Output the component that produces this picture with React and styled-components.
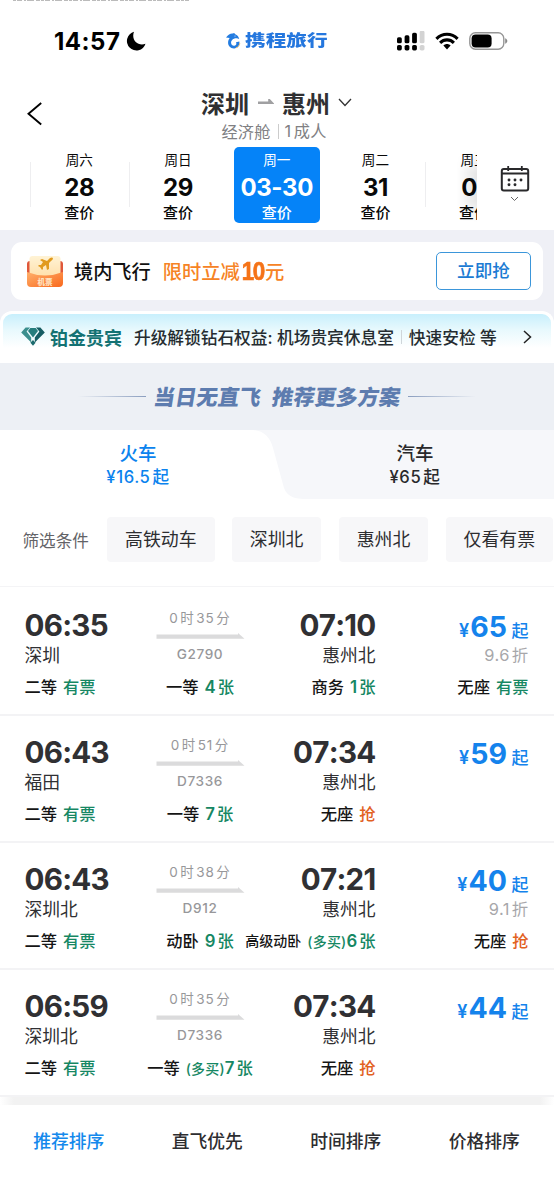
import React from "react";
import styled, { createGlobalStyle } from "styled-components";

const GlobalStyle = createGlobalStyle`
  * { box-sizing: border-box; }
  body {
    margin: 0;
    background: #fff;
    color: #2b2b2d;
    font-family: Inter, "Noto Sans CJK SC", sans-serif;
    -webkit-font-smoothing: antialiased;
  }
`;

const Page = styled.div`
  width: 554px;
  height: 1200px;
  overflow: hidden;
  background: #fff;
  display: flex;
  flex-direction: column;
  white-space: nowrap;
`;

const StatusBar = styled.header`
  height: 80px;
  flex: none;
  display: grid;
  grid-template-rows: 4px 74px;
  grid-template-columns: 226px 1fr 157px;
`;

const StatusTrace = styled.div`
  grid-column: 1 / -1;
  padding-left: 13px;
  svg { display: block; }
`;

const StatusCell = styled.div`
  display: flex;
  align-items: center;
`;

const Clock = styled.span`
  margin-left: 54px;
  width: 72px;
  font-size: 24px;
  font-weight: 700;
  letter-spacing: 0.5px;
  color: #000;
`;

const Brand = styled.span`
  display: inline-block;
  transform: scaleX(1.29);
  transform-origin: left center;
  margin: -2px 0 0 4px;
  font-size: 16px;
  line-height: 20px;
  font-weight: 900;
  color: #2577de;
`;

const StatusIcons = styled(StatusCell)`
  gap: 10px;
`;

const Header = styled.div`
  height: 66px;
  flex: none;
  display: grid;
  grid-template-columns: 60px 1fr 60px;
  svg { display: block; }
`;

const Back = styled.div`
  padding: 22px 0 0 27px;
`;

const Route = styled.div`
  display: flex;
  flex-direction: column;
  align-items: center;
`;

const RouteTitle = styled.div`
  display: flex;
  align-items: center;
  height: 36px;
  margin: 4px 0 2px -1px;
  font-size: 24px;
  font-weight: 700;
  color: #303032;
  svg:first-of-type { margin: 0 8px 0 9px; }
  svg:last-of-type { margin-left: 8px; }
`;

const RouteMeta = styled.div`
  display: flex;
  align-items: center;
  height: 18px;
  margin-left: -6px;
  font-size: 16.2px;
  color: #808083;
  letter-spacing: 0.2px;
  span + span {
    border-left: 1px solid #ccc;
    margin-left: 7px;
    padding-left: 6px;
    line-height: 15px;
  }
`;

const Adults = styled.b`
  font-weight: 400;
  margin-right: 2.5px;
`;

const Calendar = styled.div`
  height: 84px;
  flex: none;
  display: flex;
`;

const Dates = styled.div`
  width: 477px;
  padding-left: 30px;
  display: flex;
  overflow: hidden;
  position: relative;
  &::after {
    content: "";
    position: absolute;
    right: 0;
    top: 6px;
    width: 20px;
    height: 70px;
    background: linear-gradient(90deg, rgba(0,0,0,0), rgba(0,0,0,0.1));
    mask-image: linear-gradient(transparent, #000 30%, #000 70%, transparent);
  }
`;

const DateCell = styled.div`
  flex: none;
  width: 98.7px;
  height: 78px;
  display: flex;
  justify-content: center;
  background: ${(p) => (p.$line ? "linear-gradient(#eeeef0, #eeeef0) 0 16px / 1px 45px no-repeat" : "none")};
`;

const DateTile = styled.div`
  width: 86px;
  height: 76px;
  margin-top: 1px;
  border-radius: 5px;
  text-align: center;
  color: ${(p) => (p.$active ? "#fff" : "#090909")};
  background: ${(p) => (p.$active ? "#0583f8" : "transparent")};
`;

const Weekday = styled.div`
  height: 27px;
  padding-top: 3px;
  font-size: 13.6px;
  line-height: 20px;
`;

const DayNumber = styled.div`
  font-size: 24px;
  line-height: 28px;
  font-weight: 700;
  letter-spacing: -0.4px;
`;

const PriceHint = styled.div`
  padding-top: 1px;
  font-size: 15px;
  line-height: 20px;
  font-weight: 500;
`;

const CalendarButton = styled.div`
  flex: 1;
  padding: 20px 2px 0 0;
  display: flex;
  flex-direction: column;
  align-items: center;
  gap: 3px;
`;

const PromoBand = styled.section`
  height: 81px;
  flex: none;
  padding: 12px 11px;
  background: #eff0f6;
`;

const PromoCard = styled.div`
  height: 58px;
  border-radius: 11px;
  background: #fff;
  padding: 0 12px 0 15px;
  display: flex;
  align-items: center;
`;

const PromoTitle = styled.span`
  margin: -1px 0 0 10px;
  font-size: 19.2px;
  font-weight: 500;
  color: #111;
`;

const PromoOffer = styled.span`
  margin: -1px 0 0 12px;
  flex: 1;
  font-size: 19.3px;
  font-weight: 500;
  color: #f68325;
  display: flex;
  align-items: center;
  b {
    font-family: "Liberation Sans", sans-serif;
    font-size: 26px;
    line-height: 26px;
    width: 25px;
    letter-spacing: -1.6px;
    color: #f57317;
    transform: scaleX(0.86);
    -webkit-text-stroke: 0.7px #f57317;
  }
`;

const GrabButton = styled.button`
  width: 95px;
  height: 38px;
  border: 1px solid #3b96da;
  border-radius: 5px;
  background: #fff;
  color: #1c7bd3;
  font: 500 17.6px Inter, "Noto Sans CJK SC", sans-serif;
  padding: 0 0 4px;
`;

const VipBand = styled.section`
  height: 52px;
  flex: none;
  background: #eff0f6;
`;

const VipCard = styled.div`
  height: 52px;
  border: 3px solid #fff;
  border-bottom: 0;
  border-radius: 12px 12px 0 0;
  background: linear-gradient(180deg, #c8effc 0, #e8f9fd 16px, #fff 34px);
  padding: 0 19px 4px 18px;
  display: flex;
  align-items: center;
  font-size: 16.7px;
  color: #252c30;
`;

const VipName = styled.b`
  margin: 0 12px 0 5px;
  font-size: 18px;
  font-weight: 700;
  color: #137273;
`;

const VipPerks = styled.span`
  flex: 1;
  font-weight: 500;
  display: flex;
  align-items: center;
`;

const VipDivider = styled.i`
  width: 1px;
  height: 14px;
  margin: 0 7px;
  background: #cfd6da;
`;

const Notice = styled.section`
  height: 67px;
  flex: none;
  background: #edf0f5;
  display: flex;
  align-items: center;
  justify-content: center;
  gap: 8px;
`;

const NoticeText = styled.h2`
  margin: 0;
  font-size: 21.3px;
  line-height: 30px;
  font-weight: 900;
  color: #5d7caf;
  transform: skewX(-9deg);
  letter-spacing: 0.1px;
  word-spacing: 7px;
`;

const NoticeLine = styled.span`
  width: 68px;
  height: 1.5px;
  background: linear-gradient(${(p) => (p.$right ? "270deg" : "90deg")}, rgba(127, 148, 185, 0), #8b9ebf);
`;

const Tabs = styled.nav`
  height: 70px;
  flex: none;
  display: flex;
  position: relative;
`;

const Tab = styled.div`
  flex: 1;
  height: ${(p) => (p.$active ? 70 : 69)}px;
  padding: 10px 1px 0 0;
  text-align: center;
  background: ${(p) => (p.$active ? "#fff" : "#f6f7fa")};
  color: ${(p) => (p.$active ? "#0b83ee" : "#29292b")};
  font-weight: 500;
`;

const TabName = styled.div`
  font-size: 18.5px;
  line-height: 27px;
`;

const TabPrice = styled.div`
  font-size: 16.6px;
  line-height: 20px;
  letter-spacing: 0.6px;
  span { margin-right: 2px; }
`;

const TabSlope = styled.svg`
  position: absolute;
  left: 250px;
  top: 0;
`;

const Filters = styled.div`
  height: 87px;
  flex: none;
  padding: 17px 0 0 22.5px;
  margin-bottom: 1.4px;
  display: flex;
  border-bottom: 1px solid #f4f4f6;
  overflow: hidden;
`;

const FilterLabel = styled.span`
  width: 84.5px;
  flex: none;
  font-size: 16.6px;
  line-height: 48px;
  color: #636367;
`;

const Chip = styled.span`
  flex: none;
  height: 45px;
  margin-right: 17.2px;
  padding: 0 18px;
  border-radius: 4px;
  background: #f7f7f9;
  font-size: 17.9px;
  line-height: 46px;
  color: #2d2d30;
`;

const Trip = styled.article`
  height: 127.2px;
  flex: none;
  padding: 19.4px 25px 0 24.5px;
  display: grid;
  grid-template-columns: 121px 109px 121px 153px;
  grid-template-rows: 63px 30px;
  border-bottom: 2px solid #f3f3f5;
`;

const Stop = styled.div`
  text-align: ${(p) => (p.$end ? "right" : "left")};
`;

const Time = styled.div`
  font-size: 29.6px;
  line-height: 35px;
  height: 35px;
  font-weight: 700;
  font-kerning: none;
  letter-spacing: -0.75px;
  margin-right: ${(p) => (p.$end ? 0 : -0.75)}px;
  color: #303033;
`;

const Station = styled.div`
  font-size: 17.8px;
  line-height: 25px;
  color: #303033;
`;

const Journey = styled.div`
  padding-top: 1px;
  text-align: center;
  color: #97979a;
  svg { display: block; margin: 0 auto; }
`;

const Duration = styled.div`
  font-size: 13.5px;
  line-height: 18px;
  height: 24px;
  letter-spacing: 1px;
  span { margin-right: 1.5px; }
  span + span { margin-left: 1.5px; }
`;

const TrainNumber = styled.div`
  margin-top: 5px;
  font-size: 13.6px;
  line-height: 20px;
  font-weight: 500;
  letter-spacing: 0.6px;
`;

const Fare = styled.div`
  text-align: right;
`;

const Price = styled.div`
  display: flex;
  align-items: baseline;
  justify-content: flex-end;
  height: 37px;
  line-height: 38px;
  color: #1483ec;
  font-weight: 500;
  font-size: 17px;
  b {
    font-size: 28.5px;
    font-weight: 700;
    margin: 0 4.5px 0 1px;
  }
`;

const Yen = styled.span`
  font-size: 18px;
  font-weight: 600;
`;

const Discount = styled.div`
  font-size: 16.4px;
  line-height: 21px;
  color: #a7a7aa;
  letter-spacing: 0.4px;
  span { margin-right: 2px; }
`;

const Seat = styled.div`
  display: flex;
  align-items: center;
  gap: 6px;
  height: 30px;
  font-size: 16.3px;
  font-weight: 500;
  color: #151515;
  justify-content: ${(p) => p.$align};
`;

const SeatName = styled.span`
  font-size: ${(p) => (p.$compact ? "14px" : "inherit")};
`;

const SeatCount = styled.span`
  color: ${(p) => (p.$rush ? "#e2611f" : "#168763")};
  small { font-size: 14px; letter-spacing: 0.2px; }
  b {
    font-weight: 600;
    font-size: 16.8px;
    margin-right: 2px;
  }
`;

const BarGap = styled.div`
  height: 8px;
  flex: none;
  background: linear-gradient(90deg, #fff 0, #f2f2f2 14px, #f2f2f2 540px, #fff 554px);
`;

const SortBar = styled.footer`
  flex: 1;
  display: flex;
  background: #fff;
`;

const SortItem = styled.div`
  flex: 1;
  text-align: center;
  padding: 23px 1px 0 0;
  font-size: 17.8px;
  line-height: 28px;
  font-weight: 500;
  color: ${(p) => (p.$active ? "#1489ec" : "#2d2d30")};
`;

const Moon = () => (
  <svg width="21" height="20" viewBox="0 0 21 20">
    <path d="M8 .8A9.5 9.5 0 1 0 19.5 12.8C12 15.6 4.8 9 8 .8Z" fill="#000" />
  </svg>
);

const Dolphin = () => (
  <svg width="15" height="16" viewBox="0 0 15 16">
    <path d="M0 4.6C2.3 1.6 4 .4 6.6.5L8.3 0l.6 1.1c2.6 1 3.8 2.8 4.3 5L11 5.3C7.6 4.8 4.8 7.2 5.1 10c.2 2.2 2.2 3.2 3.9 2.5 1.4-.6 1.7-2 1-3.3l3.3-.6c.9 3.6-1.3 6.6-4.8 6.8-4 .3-6.8-2.6-6.4-6.4.2-1.8.9-3.1 1.6-4Z" fill="#237ce0" />
    <path d="M13.8 10c-.2 2.6-1.8 4.3-4 4.9" fill="none" stroke="#efc174" strokeWidth="1" />
    <circle cx="9" cy="3" r=".5" fill="#fff" />
  </svg>
);

const Signal = () => (
  <svg width="28" height="20" viewBox="0 0 28 20">
    {[[0, 6], [7.6, 8], [15.1, 10.5], [22.7, 12.5]].map(([x, h], i) => (
      <g key={x} fill={i === 3 ? "#d3d3d3" : "#000"}>
        <rect x={x} y={12.3 - h} width="4.8" height={h} rx="1.6" />
        <rect x={x} y="14" width="4.8" height="5.4" rx="1.6" />
      </g>
    ))}
  </svg>
);

const Wifi = () => (
  <svg width="24" height="18" viewBox="0 0 24 18">
    <g fill="none" stroke="#000" strokeWidth="3.1">
      <path d="M1.4 6.8C7.5.7 16.5.7 22.6 6.8" />
      <path d="M5.1 10.8c4-3.9 9.8-3.9 13.8 0" />
    </g>
    <path d="M8.4 13.6c2.1-2 5.1-2 7.2 0L12 17.4Z" fill="#000" />
  </svg>
);

const Battery = () => (
  <svg width="39" height="18" viewBox="0 0 39 18">
    <rect x=".8" y=".8" width="34" height="16.4" rx="5.6" fill="#fff" stroke="#969696" strokeWidth="1.4" />
    <rect x="2.6" y="2.6" width="20" height="12.8" rx="4" fill="#000" />
    <path d="M36.2 6.2c2.8 1.3 2.8 4.3 0 5.6Z" fill="#888" />
  </svg>
);

const Chevron = ({ width, height, weight = 1.3, color = "#333" }) => (
  <svg width={width} height={height} viewBox={`0 0 ${width} ${height}`}>
    <path d={`M1 1L${width / 2} ${height - 1.5}L${width - 1} 1`} fill="none" stroke={color} strokeWidth={weight} />
  </svg>
);

const CalendarIcon = () => (
  <svg width="30" height="27" viewBox="0 0 30 27">
    <rect x="1.8" y="3" width="26.4" height="21.6" rx="2" fill="none" stroke="#29292b" strokeWidth="2" />
    <path d="M2 7.5h26M8.2 0v5M21.8 0v5" stroke="#29292b" strokeWidth="1.8" />
    <g fill="#29292b">
      {[[9, 14], [15, 14], [21, 14], [9, 18.8], [15, 18.8]].map(([x, y]) => (
        <circle key={`${x}-${y}`} cx={x} cy={y} r="1.45" />
      ))}
    </g>
  </svg>
);

const TicketLabel = styled.text`
  font: 900 7.5px "Noto Sans CJK SC", sans-serif;
  fill: #ffe3c2;
`;

const TicketIcon = () => (
  <svg width="38" height="33" viewBox="0 0 38 33">
    <defs>
      <linearGradient id="pocket" x1="0" y1="0" x2="1" y2="1">
        <stop offset="0" stopColor="#ffb06b" />
        <stop offset="1" stopColor="#f9681d" />
      </linearGradient>
      <linearGradient id="sheet" x1="0" y1="0" x2="0" y2="1">
        <stop offset="0" stopColor="#fff3d5" />
        <stop offset="1" stopColor="#ffdda5" />
      </linearGradient>
    </defs>
    <rect x="1" y="6" width="36" height="16" rx="3" fill="#df573a" />
    <rect x="3.5" y="1" width="31" height="24" rx="3" fill="url(#sheet)" />
    <path d="M1 17q18 7 36 0v11q0 4-4 4H5q-4 0-4-4Z" fill="url(#pocket)" />
    <path d="M14 5l2-1 5 2 3-3q2-1 3 0 0 2-2 3l-2 2 0 6-2 1-1-5-3 2v2l-1 1-2-3-2-1 1-1h2l2-3Z" fill="#e19a1d" />
    <TicketLabel x="11.5" y="29.5">机票</TicketLabel>
  </svg>
);

const Diamond = () => (
  <svg width="24" height="19" viewBox="0 0 24 19">
    <path d="M4.6.4H9L5.6 4.4l4.6 6.2v4.8L.2 5.4Z" fill="#3c8f8e" />
    <path d="M19.4.4H15l3.4 4-4.6 6.2v4.8l10-10Z" fill="#175d63" />
    <path d="M9.3.9h5.4L17 4.1 12 10.6 7 4.1Z" fill="#267d7d" />
    <path d="M12 12.9l2.6 2.9L12 18.8l-2.6-3Z" fill="#1c6b6e" />
  </svg>
);

const RouteArrow = () => (
  <svg width="16" height="8" viewBox="0 0 16 8">
    <path d="M0 3.4h10.2V.9h1.6L16 5.4v.7H0Z" fill="#a0a0a2" />
  </svg>
);

const JourneyArrow = () => (
  <svg width="89" height="6" viewBox="0 0 89 6">
    <path d="M.5 1.5H82V0l6.5 5.7H.5Z" fill="#dbdbdc" />
  </svg>
);

const days = [
  { week: "周六", day: "28", line: true },
  { week: "周日", day: "29", line: true },
  { week: "周一", day: "03-30", active: true },
  { week: "周二", day: "31" },
  { week: "周三", day: "01", line: true },
];

const seat = (name, count, extra = {}) => ({ name, count, ...extra });
const rush = { rush: true };
const more = { more: true };

const trips = [
  {
    from: ["06:35", "深圳"], to: ["07:10", "惠州北"], time: ["0", "35"], train: "G2790", price: 65, discount: "9.6",
    seats: [seat("二等", "有票"), seat("一等", 4), seat("商务", 1), seat("无座", "有票")],
  },
  {
    from: ["06:43", "福田"], to: ["07:34", "惠州北"], time: ["0", "51"], train: "D7336", price: 59,
    seats: [seat("二等", "有票"), seat("一等", 7), seat("无座", "抢", rush)],
  },
  {
    from: ["06:43", "深圳北"], to: ["07:21", "惠州北"], time: ["0", "38"], train: "D912", price: 40, discount: "9.1",
    seats: [seat("二等", "有票"), seat("动卧", 9), seat("高级动卧", 6, more), seat("无座", "抢", rush)],
  },
  {
    from: ["06:59", "深圳北"], to: ["07:34", "惠州北"], time: ["0", "35"], train: "D7336", price: 44,
    seats: [seat("二等", "有票"), seat("一等", 7, more), seat("无座", "抢", rush)],
  },
];

const seatAlign = ["flex-start", "center", "flex-end", "flex-end"];

function TripRow({ trip }) {
  return (
    <Trip>
      <Stop>
        <Time>{trip.from[0]}</Time>
        <Station>{trip.from[1]}</Station>
      </Stop>
      <Journey>
        <Duration><span>{trip.time[0]}</span>时<span>{trip.time[1]}</span>分</Duration>
        <JourneyArrow />
        <TrainNumber>{trip.train}</TrainNumber>
      </Journey>
      <Stop $end>
        <Time $end>{trip.to[0]}</Time>
        <Station>{trip.to[1]}</Station>
      </Stop>
      <Fare>
        <Price><Yen>¥</Yen><b>{trip.price}</b>起</Price>
        {trip.discount && <Discount><span>{trip.discount}</span>折</Discount>}
      </Fare>
      {trip.seats.map((s, i) => (
        <Seat key={s.name} $align={seatAlign[i]}>
          <SeatName $compact={s.name.length > 2}>{s.name}</SeatName>
          <SeatCount $rush={s.rush}>
            {s.more && <small>(多买)</small>}
            {typeof s.count === "number" ? <><b>{s.count}</b>张</> : s.count}
          </SeatCount>
        </Seat>
      ))}
    </Trip>
  );
}

export default function App() {
  return (
    <Page>
      <GlobalStyle />
      <StatusBar>
        <StatusTrace>
          <svg width="176" height="2" viewBox="0 0 176 2">
            <path d="M0 .5h176" stroke="#bbb" strokeWidth="1" strokeDasharray="3 1 5 2 2 1 7 2 4 1" />
          </svg>
        </StatusTrace>
        <StatusCell><Clock>14:57</Clock><Moon /></StatusCell>
        <StatusCell><Dolphin /><Brand>携程旅行</Brand></StatusCell>
        <StatusIcons><Signal /><Wifi /><Battery /></StatusIcons>
      </StatusBar>

      <Header>
        <Back>
          <svg width="16" height="24" viewBox="0 0 16 24">
            <path d="M14.2 1L1.5 11.7 14.2 22.5" fill="none" stroke="#000" strokeWidth="1.9" />
          </svg>
        </Back>
        <Route>
          <RouteTitle>
            深圳<RouteArrow />惠州<Chevron width={14} height={9} />
          </RouteTitle>
          <RouteMeta><span>经济舱</span><span><Adults>1</Adults>成人</span></RouteMeta>
        </Route>
      </Header>

      <Calendar>
        <Dates>
          {days.map((d) => (
            <DateCell key={d.week} $line={d.line}>
              <DateTile $active={d.active}>
                <Weekday>{d.week}</Weekday>
                <DayNumber>{d.day}</DayNumber>
                <PriceHint>查价</PriceHint>
              </DateTile>
            </DateCell>
          ))}
        </Dates>
        <CalendarButton>
          <CalendarIcon />
          <Chevron width={9} height={6} weight={1} color="#666" />
        </CalendarButton>
      </Calendar>

      <PromoBand>
        <PromoCard>
          <TicketIcon />
          <PromoTitle>境内飞行</PromoTitle>
          <PromoOffer>限时立减<b>10</b>元</PromoOffer>
          <GrabButton>立即抢</GrabButton>
        </PromoCard>
      </PromoBand>

      <VipBand>
        <VipCard>
          <Diamond />
          <VipName>铂金贵宾</VipName>
          <VipPerks>升级解锁钻石权益: 机场贵宾休息室<VipDivider />快速安检 等</VipPerks>
          <svg width="9" height="14" viewBox="0 0 9 14">
            <path d="M1 1l6.5 6L1 13" fill="none" stroke="#222" strokeWidth="1.5" />
          </svg>
        </VipCard>
      </VipBand>

      <Notice>
        <NoticeLine />
        <NoticeText>当日无直飞 推荐更多方案</NoticeText>
        <NoticeLine $right />
      </Notice>

      <Tabs>
        <Tab $active><TabName>火车</TabName><TabPrice><span>¥16.5</span>起</TabPrice></Tab>
        <Tab><TabName>汽车</TabName><TabPrice><span>¥65</span>起</TabPrice></Tab>
        <TabSlope width="54" height="70" viewBox="0 0 54 70">
          <path d="M0 0h54v70H0Z" fill="#fff" />
          <path d="M3 0C14 1 20 7 23 18l11 40Q38 69 54 69V0Z" fill="#f6f7fa" />
        </TabSlope>
      </Tabs>

      <Filters>
        <FilterLabel>筛选条件</FilterLabel>
        <Chip>高铁动车</Chip>
        <Chip>深圳北</Chip>
        <Chip>惠州北</Chip>
        <Chip>仅看有票</Chip>
      </Filters>

      {trips.map((t, i) => <TripRow key={i} trip={t} />)}

      <BarGap />
      <SortBar>
        <SortItem $active>推荐排序</SortItem>
        <SortItem>直飞优先</SortItem>
        <SortItem>时间排序</SortItem>
        <SortItem>价格排序</SortItem>
      </SortBar>
    </Page>
  );
}
